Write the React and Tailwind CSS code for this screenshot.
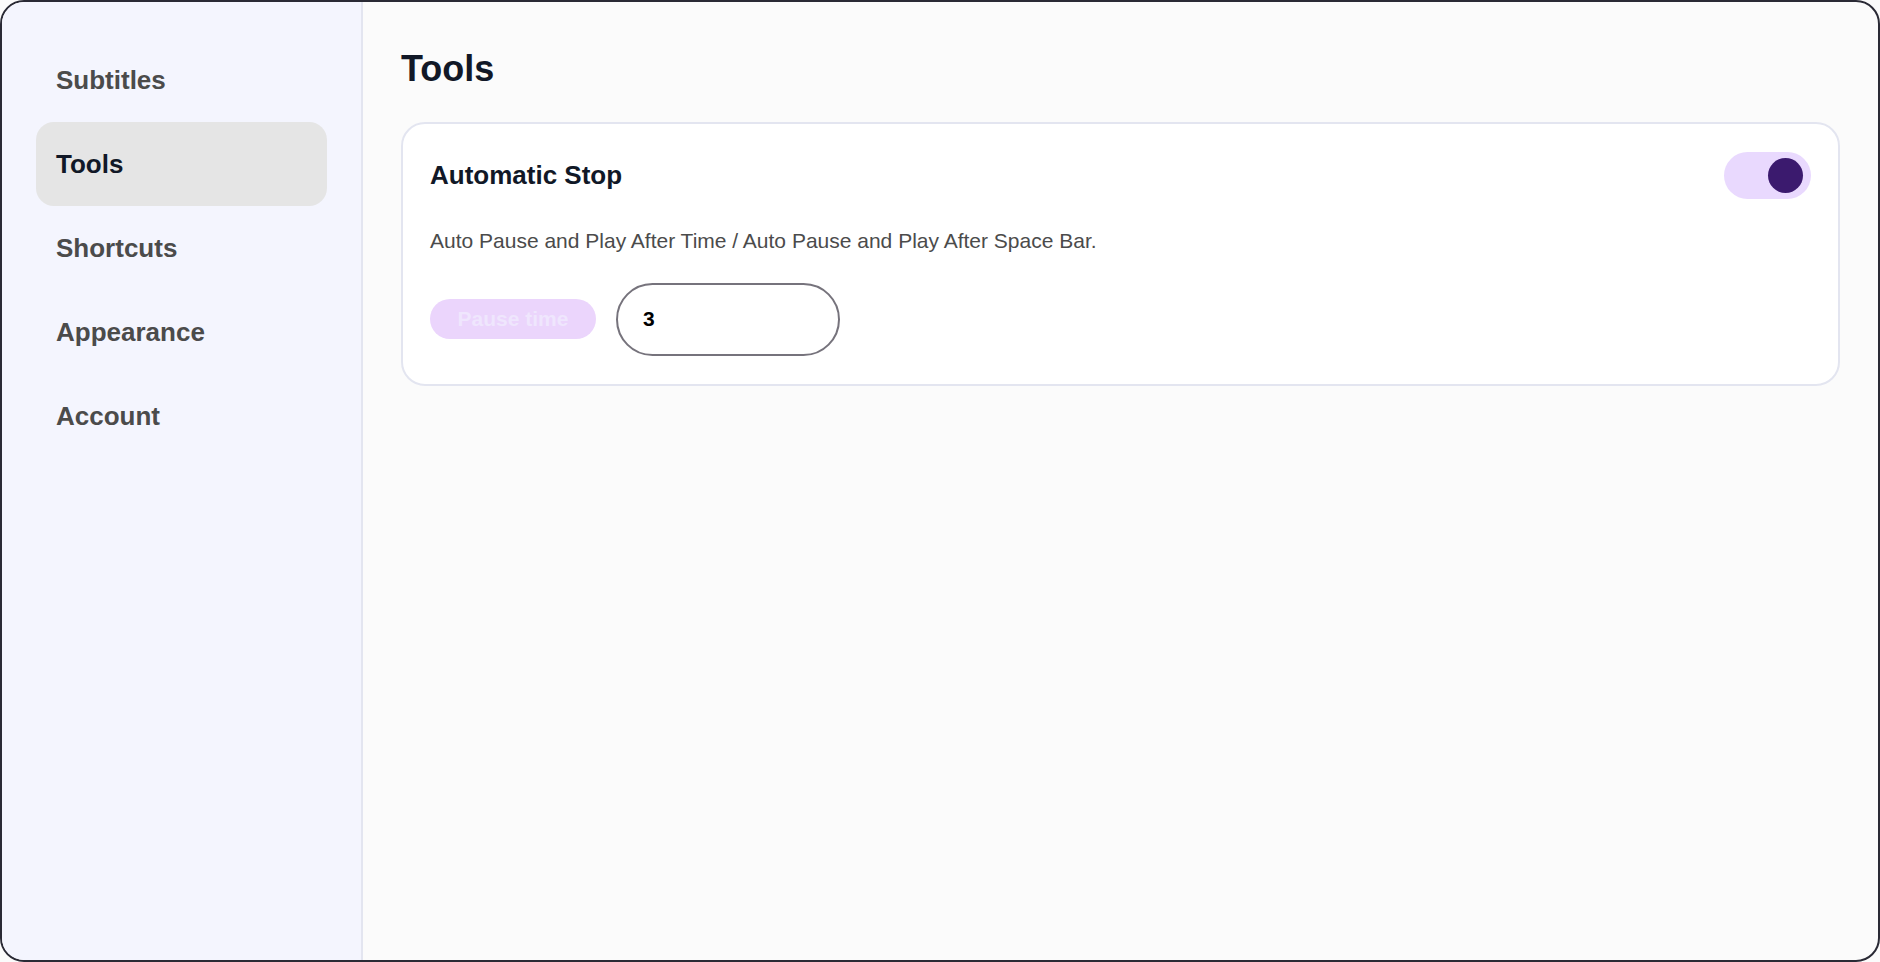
import React from 'react';

const items = ['Subtitles', 'Tools', 'Shortcuts', 'Appearance', 'Account'];

export default function App() {
  return (
    <div className="h-[962px] w-[1880px] bg-[#fbfbfb] font-[Liberation_Sans]">
      <div className="flex h-full w-full overflow-hidden rounded-[24px] border-2 border-[#2a2a35]">
        <aside className="flex w-[361px] shrink-0 flex-col border-r-2 border-[#e3e5f0] bg-[#f4f5fe] px-[34px] pt-[36px]">
          {items.map((it) => (
            <div
              key={it}
              className={`flex h-[84px] items-center rounded-[18px] px-[20px] text-[26px] font-bold ${
                it === 'Tools' ? 'bg-[#e5e5e5] text-[#111827]' : 'text-[#4b4b4b]'
              }`}
            >
              {it}
            </div>
          ))}
        </aside>
        <main className="flex-1 px-[38px] pt-[44px]">
          <h1 className="text-[36px] font-bold leading-[46px] text-[#111827]">Tools</h1>
          <section className="mt-[30px] rounded-[24px] border-2 border-[#e3e5f0] bg-white px-[27px] pb-[28px] pt-[28px]">
            <div className="flex items-center justify-between">
              <h2 className="text-[26px] font-bold text-[#111827]">Automatic Stop</h2>
              <div className="flex h-[47px] w-[87px] items-center justify-end rounded-full bg-[#e9d9fe] pr-[8px]">
                <div className="h-[35px] w-[35px] rounded-full bg-[#3b1a6e]" />
              </div>
            </div>
            <p className="mt-[26px] text-[21px] text-[#4b4b4b]">
              Auto Pause and Play After Time / Auto Pause and Play After Space Bar.
            </p>
            <div className="mt-[26px] flex items-center gap-[20px]">
              <span className="flex h-[40px] w-[166px] items-center justify-center rounded-full bg-[#ebd5fc] text-[21px] font-bold text-[#efe6fd]">
                Pause time
              </span>
              <div className="flex h-[73px] w-[224px] items-center rounded-full border-2 border-[#76737c] px-[25px] text-[21px] font-bold text-black">
                3
              </div>
            </div>
          </section>
        </main>
      </div>
    </div>
  );
}
